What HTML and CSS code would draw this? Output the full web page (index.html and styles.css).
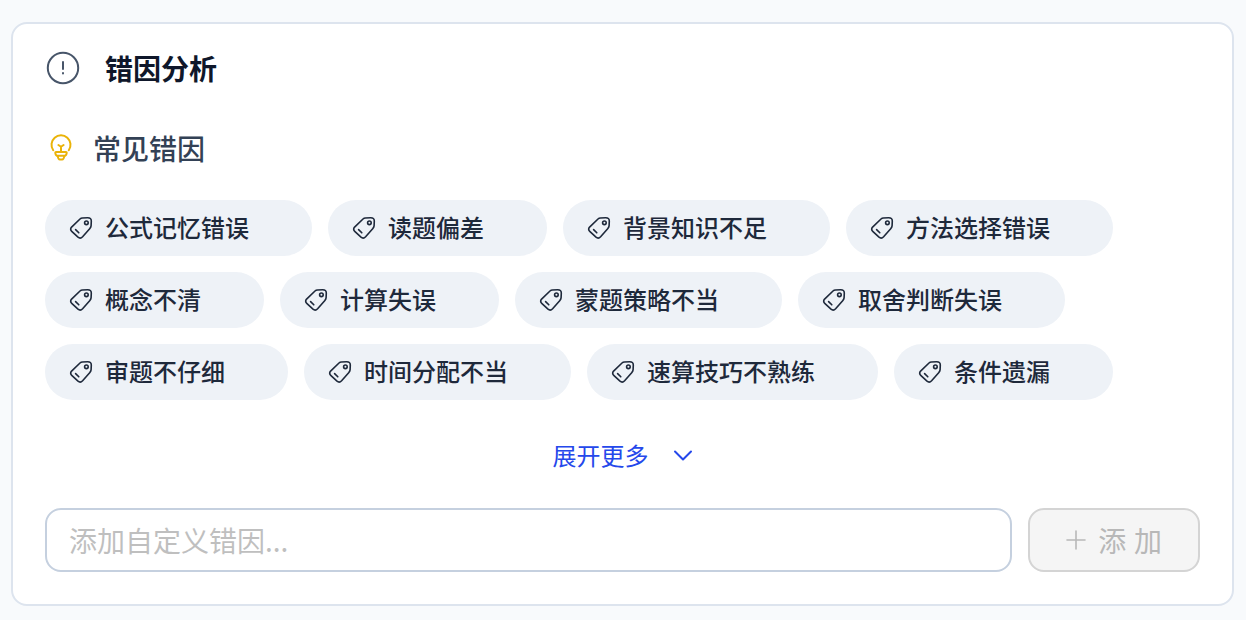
FILE: index.html
```html
<!DOCTYPE html>
<html lang="zh-CN">
<head>
  <meta charset="UTF-8">
  <meta name="viewport" content="width=device-width, initial-scale=1.0">
  <title>错因分析</title>
  <link rel="stylesheet" href="styles.css">
</head>
<body>

  <!-- Icon shared by all the tags -->
  <svg class="sprite" aria-hidden="true">
    <symbol id="icon-tag" viewBox="0 0 24 24">
      <path d="M11 3 Q12 2.1 13.4 2 L18.6 1.7 Q22.3 1.6 22.3 5 L22.1 9.6 Q22 11.2 20.9 12.4 L13.6 20.8 Q11.4 23.2 9 21.2 L3 15.6 Q0.6 13.4 2.6 11.1 Z"/>
      <circle cx="17.4" cy="6.8" r="1.8"/>
      <path d="M6.6 13.6 L9.8 16.8"/>
    </symbol>
  </svg>

  <section class="card">
    <h2 class="card-title">
      <svg class="alert-icon" viewBox="0 0 36 36" aria-hidden="true">
        <circle cx="18" cy="18" r="15.2"/>
        <path d="M18 12 V19 M18 23 V23.6"/>
      </svg>
      错因分析
    </h2>

    <h3 class="sub-title">
      <svg class="bulb-icon" viewBox="0 0 24 28" aria-hidden="true">
        <path d="M4.2 16.2 A9.5 9.5 0 1 1 19.8 16.2"/>
        <path d="M9.4 11 L12 12.8 L14.6 11 M12 12.8 V17.8"/>
        <path d="M7.2 18 H16.8 Q18 18 17.6 19.4 Q17 21.8 15.4 21.8 H8.6 Q7 21.8 6.4 19.4 Q6 18 7.2 18 Z"/>
        <path d="M8.8 22 Q9.2 25.6 10.8 25.6 H13.2 Q14.8 25.6 15.2 22"/>
      </svg>
      常见错因
    </h3>

    <div class="tags">
      <button type="button" class="tag"><svg class="tag-icon" aria-hidden="true"><use href="#icon-tag"/></svg><span>公式记忆错误</span></button>
      <button type="button" class="tag"><svg class="tag-icon" aria-hidden="true"><use href="#icon-tag"/></svg><span>读题偏差</span></button>
      <button type="button" class="tag"><svg class="tag-icon" aria-hidden="true"><use href="#icon-tag"/></svg><span>背景知识不足</span></button>
      <button type="button" class="tag"><svg class="tag-icon" aria-hidden="true"><use href="#icon-tag"/></svg><span>方法选择错误</span></button>
      <button type="button" class="tag"><svg class="tag-icon" aria-hidden="true"><use href="#icon-tag"/></svg><span>概念不清</span></button>
      <button type="button" class="tag"><svg class="tag-icon" aria-hidden="true"><use href="#icon-tag"/></svg><span>计算失误</span></button>
      <button type="button" class="tag"><svg class="tag-icon" aria-hidden="true"><use href="#icon-tag"/></svg><span>蒙题策略不当</span></button>
      <button type="button" class="tag"><svg class="tag-icon" aria-hidden="true"><use href="#icon-tag"/></svg><span>取舍判断失误</span></button>
      <button type="button" class="tag"><svg class="tag-icon" aria-hidden="true"><use href="#icon-tag"/></svg><span>审题不仔细</span></button>
      <button type="button" class="tag"><svg class="tag-icon" aria-hidden="true"><use href="#icon-tag"/></svg><span>时间分配不当</span></button>
      <button type="button" class="tag"><svg class="tag-icon" aria-hidden="true"><use href="#icon-tag"/></svg><span>速算技巧不熟练</span></button>
      <button type="button" class="tag"><svg class="tag-icon" aria-hidden="true"><use href="#icon-tag"/></svg><span>条件遗漏</span></button>
    </div>

    <button type="button" class="more-btn">
      <span>展开更多</span>
      <svg class="chevron-icon" viewBox="0 0 20 20" aria-hidden="true"><path d="M2 5.5 L10 13.5 L18 5.5"/></svg>
    </button>

    <form class="add-row">
      <input type="text" class="add-input" placeholder="添加自定义错因..." aria-label="添加自定义错因">
      <button type="submit" class="add-btn" disabled>
        <svg class="plus-icon" viewBox="0 0 20 20" aria-hidden="true"><path d="M10 1 V19 M1 10 H19"/></svg>
        添 加
      </button>
    </form>
  </section>

</body>
</html>
```

FILE: styles.css
```css
* {
  box-sizing: border-box;
}

body {
  margin: 0;
  padding: 22px 12px 14px 11px;
  font-family: "Noto Sans CJK SC", sans-serif;
  background: #f8fafc;
  color: #1e293b;
}

button,
input {
  font-family: inherit;
}

svg {
  flex: none;
  fill: none;
  stroke: currentColor;
  stroke-width: 2;
  stroke-linecap: round;
  stroke-linejoin: round;
}

.sprite {
  display: none;
}

.card {
  display: flex;
  flex-direction: column;
  padding: 24px 32px 32px;
  background: #fff;
  border: 2px solid #dde4ee;
  border-radius: 16px;
}

/* Headings */
.card-title,
.sub-title {
  display: flex;
  align-items: center;
  margin: 0;
  font-size: 28px;
  line-height: 40px;
}

.card-title {
  gap: 24px;
  margin-bottom: 40px;
  font-weight: 600;
  color: #0f172a;
}

.sub-title {
  gap: 20px;
  padding-left: 4px;
  margin-bottom: 32px;
  font-weight: 500;
  color: #334155;
}

.alert-icon {
  width: 36px;
  height: 36px;
  color: #475569;
}

.bulb-icon {
  width: 24px;
  height: 28px;
  color: #eab308;
}

/* Tags */
.tags {
  display: flex;
  flex-wrap: wrap;
  gap: 16px;
  margin-bottom: 32px;
}

.tag {
  display: flex;
  align-items: center;
  gap: 12px;
  height: 56px;
  padding: 0 63px 0 24px;
  border: none;
  border-radius: 28px;
  background: #eef2f7;
  color: #1e293b;
  font-size: 24px;
  font-weight: 500;
  cursor: pointer;
}

.tag span,
.more-btn span {
  padding-bottom: 4px;
}

.tag-icon {
  width: 24px;
  height: 24px;
  stroke-width: 1.6;
}

.more-btn {
  display: flex;
  align-items: center;
  align-self: center;
  gap: 24px;
  height: 48px;
  margin-bottom: 28px;
  padding: 0;
  border: none;
  background: none;
  color: #2548eb;
  font-size: 24px;
  cursor: pointer;
}

.chevron-icon {
  width: 20px;
  height: 20px;
}

/* Custom reason */
.add-row {
  display: flex;
  gap: 16px;
}

.add-input,
.add-btn {
  height: 64px;
  border-radius: 16px;
  font-size: 28px;
}

.add-input {
  flex: 1;
  min-width: 0;
  padding: 0 22px;
  border: 2px solid #c5d0df;
  background: #fff;
  color: #1e293b;
}

.add-input::placeholder {
  color: #bfbfbf;
}

.add-btn {
  display: flex;
  align-items: center;
  gap: 12px;
  padding: 0 36px;
  border: 2px solid #d4d4d4;
  background: #f5f5f5;
  color: #b8b8b8;
  font-family: "Liberation Sans", "Noto Sans CJK SC", sans-serif;
  white-space: nowrap;
}

.plus-icon {
  width: 20px;
  height: 20px;
  stroke-width: 1.6;
}
```
